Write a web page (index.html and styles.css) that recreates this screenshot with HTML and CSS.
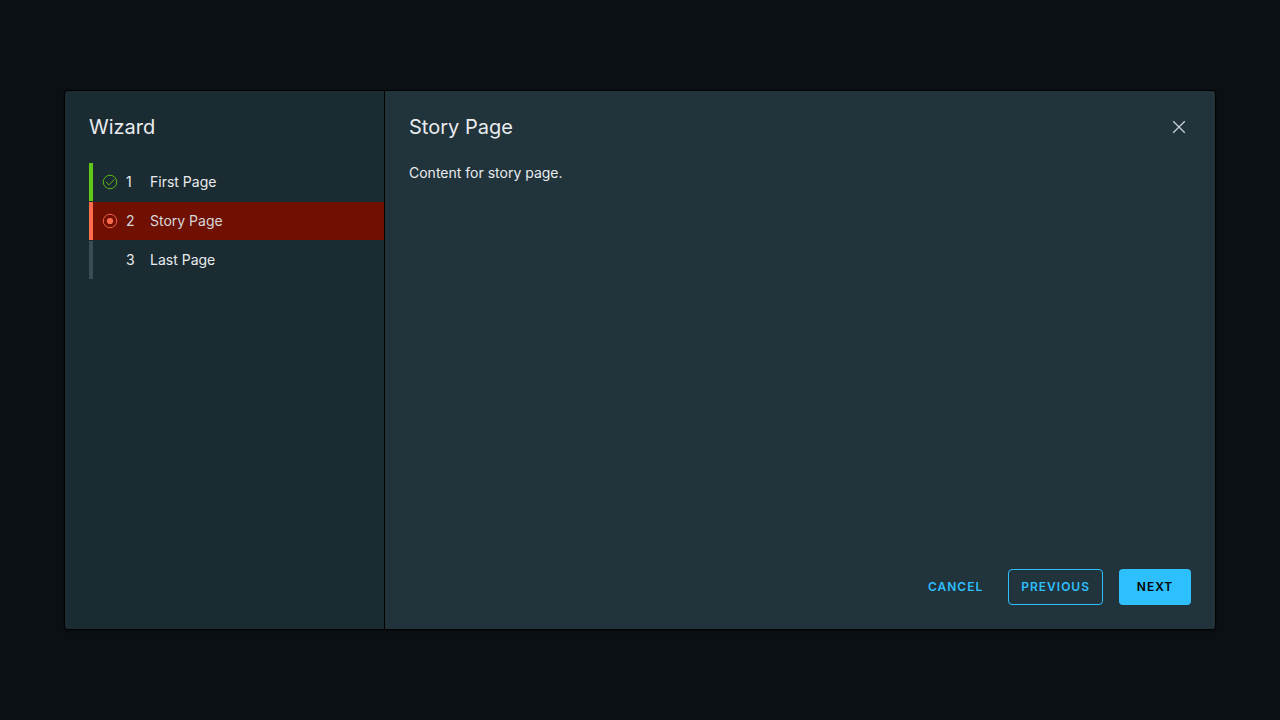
FILE: index.html
```html
<!DOCTYPE html>
<html lang="en">
<head>
<meta charset="utf-8">
<meta name="viewport" content="width=device-width, initial-scale=1">
<title>Wizard</title>
<link rel="stylesheet" href="styles.css">
</head>
<body>
<div class="backdrop">
  <div class="wizard" role="dialog" aria-modal="true" aria-labelledby="page-title">
    <nav class="stepnav" aria-label="Wizard steps">
      <h1 class="title">Wizard</h1>
      <ol class="steps">
        <li class="step complete">
          <button class="step-link" type="button">
            <svg class="step-icon" viewBox="0 0 36 36" aria-hidden="true"><circle cx="18" cy="18" r="15.2"/><path d="M8.5 17.5l7.2 7L28 12"/></svg>
            <span class="step-number">1</span>
            <span>First Page</span>
          </button>
        </li>
        <li class="step active">
          <button class="step-link" type="button" aria-current="step">
            <svg class="step-icon" viewBox="0 0 36 36" aria-hidden="true"><circle cx="18" cy="18" r="15.2"/><circle class="dot" cx="18" cy="18" r="7"/></svg>
            <span class="step-number">2</span>
            <span>Story Page</span>
          </button>
        </li>
        <li class="step">
          <button class="step-link" type="button" disabled>
            <span class="step-icon"></span>
            <span class="step-number">3</span>
            <span>Last Page</span>
          </button>
        </li>
      </ol>
    </nav>
    <main class="content">
      <header class="header">
        <h2 class="title" id="page-title">Story Page</h2>
        <button class="close" type="button" aria-label="Close">
          <svg class="close-icon" viewBox="0 0 24 24" aria-hidden="true"><path d="M6.2 6.2l11.6 11.6M17.8 6.2l-11.6 11.6"/></svg>
        </button>
      </header>
      <p class="body">Content for story page.</p>
      <footer class="footer">
        <button class="btn link" type="button">CANCEL</button>
        <button class="btn outline" type="button">PREVIOUS</button>
        <button class="btn primary" type="button">NEXT</button>
      </footer>
    </main>
  </div>
</div>
</body>
</html>
```
FILE: styles.css
```css
* {
  box-sizing: border-box;
}

body {
  margin: 0;
  background: #0b1014;
  color: #e9ecef;
  font: 14px/24px Inter, "Liberation Sans", sans-serif;
}

button {
  margin: 0;
  padding: 0;
  border: 0;
  background: none;
  color: inherit;
  font: inherit;
  cursor: pointer;
}

.backdrop {
  display: flex;
  align-items: center;
  justify-content: center;
  min-height: 100vh;
}

.wizard {
  display: grid;
  grid-template-columns: minmax(200px, 320px) 1fr;
  width: 90vw;
  min-height: 75vh;
  border: 1px solid #000;
  border-radius: 4px;
  overflow: hidden;
  box-shadow: 0 1px 2px rgba(0, 0, 0, 0.4);
}

.stepnav {
  padding: 24px 0 24px 24px;
  border-right: 1px solid #000;
  background: #1b2b32;
}

.title {
  margin: 0;
  font-size: 20px;
  font-weight: 400;
  line-height: 24px;
}

.steps {
  display: grid;
  gap: 1px;
  margin: 24px 0 0;
  padding: 0;
  list-style: none;
}

.step {
  border-left: 4px solid #3a4d55;
}

.step.complete {
  border-color: #62c818;
}

.step.active {
  border-color: #ff6b4d;
  background: #6f1000;
}

.step-link {
  display: flex;
  align-items: center;
  width: 100%;
  height: 38px;
  padding-left: 9px;
  color: #e9ecef;
  text-align: left;
}

.active .step-link {
  color: #d6d8dc;
}

.step-icon {
  width: 16px;
  height: 16px;
  margin-right: 8px;
  fill: none;
  stroke: #62c818;
  stroke-width: 2;
}

.active .step-icon {
  stroke: #ff6b4d;
}

.dot {
  fill: #ff6b4d;
  stroke: none;
}

.step-number {
  width: 24px;
}

.content {
  display: flex;
  flex-direction: column;
  padding: 24px;
  background: #21333b;
}

.header {
  display: flex;
  align-items: center;
  justify-content: space-between;
}

.close {
  width: 24px;
  height: 24px;
}

.close-icon {
  display: block;
  width: 24px;
  height: 24px;
  fill: none;
  stroke: #c5d0dc;
  stroke-width: 1.3;
}

.body {
  flex: 1;
  margin: 22px 0 24px;
}

.footer {
  display: flex;
  justify-content: flex-end;
  gap: 16px;
}

.btn {
  height: 36px;
  min-width: 72px;
  padding: 0 12px;
  border: 1px solid transparent;
  border-radius: 4px;
  color: #2ebfff;
  font-size: 12px;
  font-weight: 600;
  letter-spacing: 1px;
}

.link {
  padding: 0 8px;
}

.outline {
  border-color: #2ebfff;
}

.primary {
  background: #2ebfff;
  color: #000;
}
```
